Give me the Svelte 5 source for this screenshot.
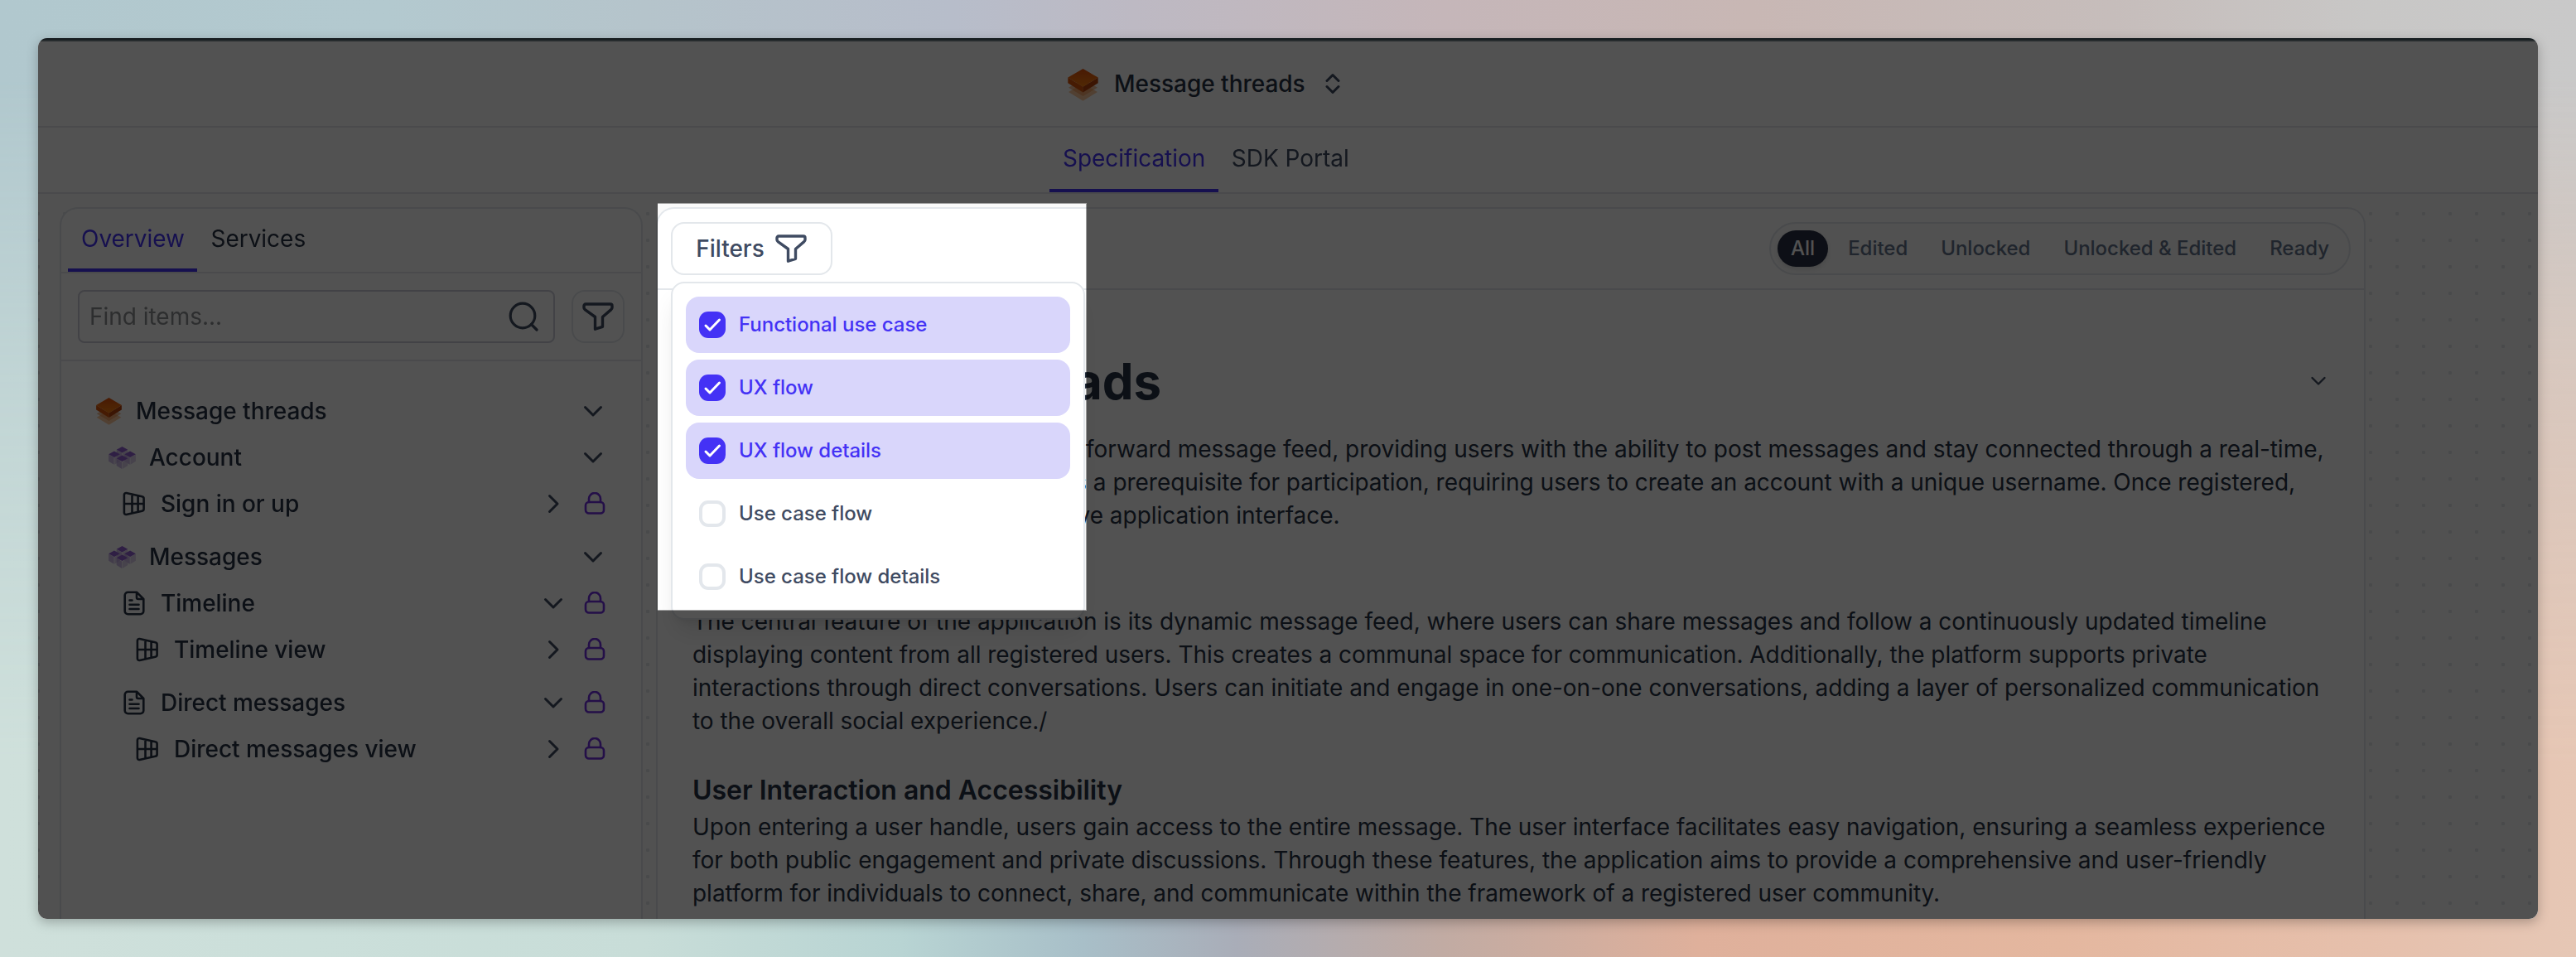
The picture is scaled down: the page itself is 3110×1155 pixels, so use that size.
<script>
  const tree = [
    { label: 'Message threads', level: 0, icon: 'stack', open: true },
    { label: 'Account', level: 1, icon: 'cubes', open: true },
    { label: 'Sign in or up', level: 2, icon: 'view', open: false, locked: true },
    { label: 'Messages', level: 1, icon: 'cubes', open: true, spaced: true },
    { label: 'Timeline', level: 2, icon: 'doc', open: true, locked: true },
    { label: 'Timeline view', level: 3, icon: 'view', open: false, locked: true },
    { label: 'Direct messages', level: 2, icon: 'doc', open: true, locked: true, spaced: true },
    { label: 'Direct messages view', level: 3, icon: 'view', open: false, locked: true }
  ];
  const states = ['All', 'Edited', 'Unlocked', 'Unlocked & Edited', 'Ready'];
  let filters = $state([
    { label: 'Functional use case', on: true },
    { label: 'UX flow', on: true },
    { label: 'UX flow details', on: true },
    { label: 'Use case flow', on: false },
    { label: 'Use case flow details', on: false }
  ]);
</script>

{#snippet stack(cls)}
  <svg class={cls} viewBox="0 0 110 118">
    <defs>
      <linearGradient id="{cls}-lid" x1="0" y1="0" x2="0" y2="1">
        <stop offset="0" stop-color="#e0500c" />
        <stop offset="1" stop-color="#f9800f" />
      </linearGradient>
    </defs>
    <polygon points="55,54 108,85 55,117 2,85" fill="#f79a4c" opacity=".55" />
    <polygon points="55,38 108,69 55,100 2,69" fill="#e8843c" opacity=".5" />
    <polygon points="0,32 55,66 55,86 0,52" fill="#d9560c" />
    <polygon points="110,32 55,66 55,86 110,52" fill="#b8430c" />
    <polygon points="55,0 110,32 55,66 0,32" fill="url(#{cls}-lid)" />
  </svg>
{/snippet}

{#snippet cube(x, y)}
  <g transform="translate({x} {y})">
    <polygon points="0,12 19,23 19,48 0,36" fill="#b79cdc" opacity=".7" />
    <polygon points="40,12 21,23 21,48 40,36" fill="#cdbbe6" opacity=".7" />
    <polygon points="20,0 40,11 20,22 0,11" fill="#9460d4" />
  </g>
{/snippet}

{#snippet funnel(cls)}
  <svg class={cls} viewBox="0 0 38 34">
    <path d="M4 2h30a2 2 0 0 1 2 2v2.200a3 3 0 0 1-1.200 2.400L24.500 17.500V29.300L15.500 32.200V17.500L3.200 8.600A3 3 0 0 1 2 6.200V4a2 2 0 0 1 2-2Z" />
  </svg>
{/snippet}

<div class="backdrop">
  <div class="window">
    <div class="chrome"></div>
    <header class="title">
      {@render stack('logo')}
      <span>Message threads</span>
      <svg class="sort" viewBox="0 0 18 26"><path d="M2 9.500 9 2.500l7 7M2 16.500l7 7 7-7" /></svg>
    </header>
    <nav class="tabs top">
      <span class="tab active">Specification</span>
      <span class="tab">SDK Portal</span>
    </nav>

    <div class="body">
      <aside class="panel side">
        <div class="tabs inner">
          <span class="tab active">Overview</span>
          <span class="tab">Services</span>
        </div>
        <div class="searchbar">
          <div class="search">
            <span>Find items...</span>
            <svg class="lens" viewBox="0 0 36 36"><circle cx="17" cy="17" r="14.800" /><path d="m27.500 27.500 6.500 6.500" /></svg>
          </div>
          <div class="square">{@render funnel('funnel')}</div>
        </div>
        <ul class="tree">
          {#each tree as n}
            <li class="row l{n.level}" class:spaced={n.spaced}>
              <span class="ico">
                {#if n.icon === 'stack'}
                  {@render stack('stack')}
                {:else if n.icon === 'cubes'}
                  <svg class="cubes" viewBox="0 0 96 79">
                    {@render cube(28, 0)}
                    {@render cube(0, 16)}
                    {@render cube(56, 16)}
                    {@render cube(28, 31)}
                  </svg>
                {:else if n.icon === 'view'}
                  <svg class="view" viewBox="0 0 28 30">
                    <path d="M4.600 2.100 23.500 6.200a2.500 2.500 0 0 1 2.100 2.500v12.600a2.500 2.500 0 0 1-2.100 2.500L4.600 27.900a2.200 2.200 0 0 1-2.700-2.200V4.300a2.200 2.200 0 0 1 2.700-2.200ZM1.900 15h23.700M11.500 4v22M18.600 5.500v19" />
                  </svg>
                {:else}
                  <svg class="doc" viewBox="0 0 26 30">
                    <path d="M16 1.700H5.500A3.800 3.800 0 0 0 1.700 5.500v19a3.800 3.800 0 0 0 3.800 3.800h15a3.800 3.800 0 0 0 3.800-3.800V10ZM16 1.700V8a2 2 0 0 0 2 2h6.300M7.500 11.500h3M7.500 16.800h11M7.500 22h11" />
                  </svg>
                {/if}
              </span>
              <span class="label">{n.label}</span>
              <svg class="chev" class:right={!n.open} viewBox="0 0 24 24"><path d="m2.500 7.500 9.500 9.500 9.500-9.500" /></svg>
              {#if n.locked}
                <svg class="lock" viewBox="0 0 26 28"><rect x="2" y="12" width="22" height="13.500" rx="4" /><path d="M6 12V8a7 7 0 0 1 14 0v4" /></svg>
              {/if}
            </li>
          {/each}
        </ul>
      </aside>

      <main class="panel main">
        <div class="toolbar">
          <div class="filter">
            <button class="filters">Filters {@render funnel('funnel')}</button>
            <div class="menu">
              {#each filters as f}
                <button class="option" class:on={f.on} onclick={() => (f.on = !f.on)}>
                  <span class="box">
                    {#if f.on}<svg viewBox="0 0 32 32"><path d="m8 17 5 5L24.500 10" /></svg>{/if}
                  </span>
                  <span class="text">{f.label}</span>
                </button>
              {/each}
            </div>
          </div>
          <div class="states">
            {#each states as s, i}<span class="pill" class:sel={i === 0}>{s}</span>{/each}
          </div>
        </div>
        <article>
          <div class="heading">
            <h1>Message threads</h1>
            <svg class="small" viewBox="0 0 24 24"><path d="m4.500 8 7.500 7.500L19.500 8" /></svg>
          </div>
          <p class="intro">
            <span class="lead"></span>forward message feed, providing users with the ability to post messages and stay connected through a real-time,<br />
            <span class="lead two">s</span> a prerequisite for participation, requiring users to create an account with a unique username. Once registered,<br />
            <span class="lead three">ve</span> application interface.
          </p>
          <p class="second">
            The central feature of the application is its dynamic message feed, where users can share messages and follow a continuously updated timeline<br />
            displaying content from all registered users. This creates a communal space for communication. Additionally, the platform supports private<br />
            interactions through direct conversations. Users can initiate and engage in one-on-one conversations, adding a layer of personalized communication<br />
            to the overall social experience./
          </p>
          <h2>User Interaction and Accessibility</h2>
          <p>
            Upon entering a user handle, users gain access to the entire message. The user interface facilitates easy navigation, ensuring a seamless experience<br />
            for both public engagement and private discussions. Through these features, the application aims to provide a comprehensive and user-friendly<br />
            platform for individuals to connect, share, and communicate within the framework of a registered user community.
          </p>
        </article>
      </main>
    </div>
    <div class="spotlight"></div>
  </div>
</div>

<style>
  :global(body) { margin: 0; }
  .backdrop {
    position: relative;
    box-sizing: border-box;
    width: 3110px;
    height: 1155px;
    padding: 46px;
    overflow: hidden;
    font-family: Inter, "Liberation Sans", sans-serif;
    font-size: 28px;
    letter-spacing: -.025px;
    color: #283244;
    background: linear-gradient(90deg, #b1c8ce 0%, #b3c9cf 15%, #b5c4cb 25%, #b7bdca 37%, #bdb9c3 44%, #c5b6b9 56%, #c8b7b4 68%, #c6bdbb 82%, #c8c7c6 92%, #c9c9c9 100%);
  }
  .backdrop::before {
    content: "";
    position: absolute;
    inset: 0;
    background: linear-gradient(90deg, #cfe0db 0%, #cbdfda 12%, #c8ddd8 25%, #b8d4d3 35%, #a8bfc8 42%, #a9adb8 48%, #c1aba3 56%, #dfb09b 66%, #e4b79f 80%, #e6c0ac 92%, #e6c7b5 100%);
    mask-image: linear-gradient(180deg, transparent 8%, #0008 40%, #000 80%);
  }
  .window {
    position: relative;
    height: 1063px;
    border-radius: 11px;
    overflow: hidden;
    background: #fff;
    display: flex;
    flex-direction: column;
    filter: drop-shadow(0 4px 7px rgba(0, 0, 0, .26));
  }
  .chrome { height: 4px; flex: none; background: linear-gradient(#465a64 50%, #77868d 50%); }
  .title {
    height: 102px;
    flex: none;
    border-bottom: 2px solid #e5e7eb;
    padding-left: 1243px;
    display: flex;
    align-items: center;
    font-weight: 500;
  }
  .logo { width: 37px; height: 39px; margin: 2px 19px 0 0; }
  .sort { width: 18px; height: 26px; margin-left: 24px; }
  svg { flex: none; display: block; }
  .sort path, .chev path, .small path, .lens, .funnel path, .view path, .doc path, .box path {
    fill: none;
    stroke: #3f4b62;
    stroke-width: 3;
    stroke-linecap: round;
    stroke-linejoin: round;
  }
  .tabs { display: flex; flex: none; border-bottom: 2px solid #e5e7eb; }
  .tabs.top { height: 78px; padding-left: 1221px; color: #3f4b62; }
  .tabs.inner { height: 76px; padding-left: 8px; }
  .tab {
    display: flex;
    align-items: center;
    padding: 0 15.500px 0 16px;
    border-bottom: 4px solid transparent;
  }
  .tab.active { color: #4432f5; border-color: #4432f5; }
  .body {
    flex: 1;
    min-height: 0;
    display: flex;
    gap: 16px;
    padding: 16px 0 0 26px;
    background: radial-gradient(circle, #e4e6ea 2px, transparent 2.500px) -16px 8px / 32px 32px, #fafafa;
  }
  .panel {
    box-sizing: border-box;
    border: 2px solid #e3e7eb;
    border-bottom: 0;
    border-radius: 22px 22px 0 0;
    background: #fff;
  }
  .side { width: 704px; }
  .main { width: 2064px; }
  .searchbar {
    height: 104px;
    border-bottom: 2px solid #e5e7eb;
    display: flex;
    align-items: center;
    gap: 20px;
    padding-left: 20px;
  }
  .search {
    box-sizing: border-box;
    width: 576px;
    height: 64px;
    border: 2px solid #cdced9;
    border-radius: 8px;
    display: flex;
    align-items: center;
    justify-content: space-between;
    padding: 0 18px 0 12px;
    color: #8d8f92;
  }
  .lens { width: 36px; height: 36px; stroke-width: 3.200; }
  .square {
    box-sizing: border-box;
    width: 64px;
    height: 64px;
    border: 2px solid #e3e7eb;
    border-radius: 16px;
    display: grid;
    place-items: center;
  }
  .funnel { width: 38px; height: 34px; }
  .funnel path { stroke-width: 3.400; }
  .tree { list-style: none; margin: 0; padding: 32px 0 0; font-weight: 500; }
  .row { height: 56px; display: flex; align-items: center; padding-right: 43px; }
  .spaced { margin-top: 8px; }
  .l0 { padding-left: 41px; padding-right: 46px; }
  .l1 { padding-left: 57px; padding-right: 46px; }
  .l2 { padding-left: 72px; }
  .l3 { padding-left: 88px; }
  .ico { width: 32px; margin-right: 16px; display: grid; place-items: center; }
  .l0 .ico, .l1 .ico { margin-right: 17px; }
  .stack { width: 31px; height: 33px; }
  .cubes { width: 33px; height: 27px; }
  .view { width: 28px; height: 30px; }
  .doc { width: 26px; height: 30px; }
  .view path, .doc path { stroke: #283244; stroke-width: 2.600; }
  .label { flex: 1; }
  .chev { width: 24px; height: 24px; }
  .chev.right { transform: rotate(-90deg); }
  .lock {
    width: 26px;
    height: 28px;
    margin-left: 25px;
    fill: none;
    stroke: #702fe0;
    stroke-width: 2.600;
    stroke-linecap: round;
  }
  .toolbar {
    height: 96px;
    border-bottom: 2px solid #e3e7eb;
    display: flex;
    align-items: center;
    justify-content: space-between;
    padding: 0 16px;
  }
  .filter { position: relative; }
  button { font: inherit; letter-spacing: inherit; font-weight: 500; color: #3f4b62; background: none; border: 0; }
  .filters {
    box-sizing: border-box;
    width: 195px;
    height: 64px;
    border: 2px solid #e3e7eb;
    border-radius: 16px;
    padding: 0 1px 0 0;
    display: flex;
    align-items: center;
    justify-content: center;
    gap: 13px;
  }
  .menu {
    position: absolute;
    z-index: 1;
    left: 0;
    top: 72px;
    box-sizing: border-box;
    width: 500px;
    padding: 16px;
    border: 2px solid #e3e7eb;
    border-radius: 16px;
    background: #fff;
    display: flex;
    flex-direction: column;
    gap: 8px;
    box-shadow: 0 20px 30px -6px rgba(0, 0, 0, .1), 0 8px 12px -8px rgba(0, 0, 0, .1);
  }
  .option {
    height: 68px;
    padding: 0 16px;
    border-radius: 16px;
    display: flex;
    align-items: center;
    gap: 16px;
    font-size: 24px;
  }
  .option.on { background: #d9d6fb; color: #4432f5; }
  .text { padding-bottom: 2px; }
  .box { box-sizing: border-box; width: 32px; height: 32px; border: 4px solid #e3e7ec; border-radius: 11px; background: #fff; }
  .on .box { border: 0; background: #4432f5; }
  .box path { stroke: #fff; }
  .states {
    height: 60px;
    border: 2px solid #e3e7eb;
    border-radius: 32px;
    background: #fafafa;
    padding: 0 8px;
    display: flex;
    align-items: center;
    gap: 8px;
    font-size: 24px;
    font-weight: 500;
    color: #64748b;
  }
  .pill { height: 44px; line-height: 44px; padding: 0 16px; border-radius: 22px; }
  .pill.sel { background: #2a3145; color: #fff; box-shadow: 0 3px 5px rgba(0, 0, 0, .1); }
  article { padding: 66px 42px 0; white-space: nowrap; }
  .heading { display: flex; align-items: center; justify-content: space-between; height: 88px; }
  h1 { margin: 0; padding-left: 60px; font-size: 60px; font-weight: 700; }
  .small { width: 24px; height: 24px; margin-right: 1px; }
  .small path { stroke-width: 2.400; }
  p { margin: 0; line-height: 40px; }
  .intro { margin-top: 18px; }
  .lead { display: inline-block; width: 475px; height: 40px; vertical-align: top; text-align: right; }
  .two { width: 476px; }
  .three { width: 496px; }
  .second { margin-top: 88px; }
  h2 { margin: 42px 0 2px; font-size: 32px; line-height: 44px; font-weight: 600; }
  .spotlight {
    position: absolute;
    z-index: 2;
    left: 748px;
    top: 199px;
    box-sizing: border-box;
    width: 518px;
    height: 492px;
    border: 1px solid rgba(0, 0, 0, .36);
    border-left: 0;
    box-shadow: 0 0 0 4000px rgba(0, 0, 0, .68);
  }
</style>
